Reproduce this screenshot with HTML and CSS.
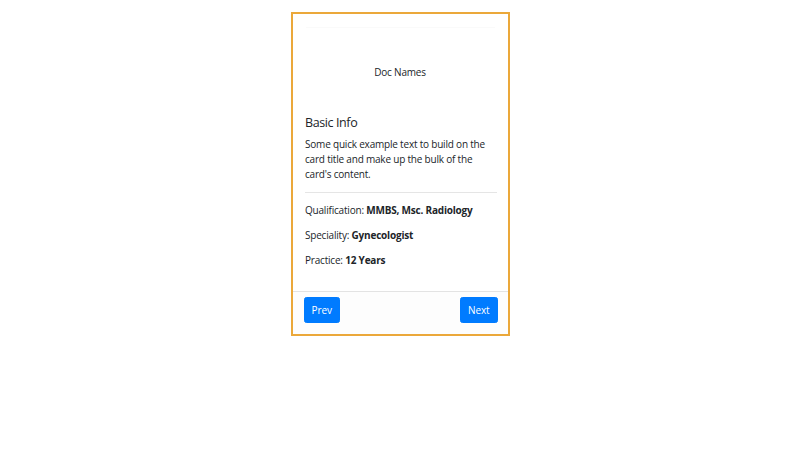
FILE: index.html
```html
<!DOCTYPE html>
<html lang="en">
<head>
<meta charset="utf-8">
<title>Doc Card</title>
<link rel="stylesheet" href="styles.css">
</head>
<body>
<div class="card">
  <div class="card-img">
    <span class="img-alt">Doc Names</span>
  </div>
  <div class="card-body">
    <h5 class="card-title">Basic Info</h5>
    <p class="card-text">Some quick example text to build on the card title and make up the bulk of the card's content.</p>
    <hr class="divider">
    <p class="info">Qualification: <b>MMBS, Msc. Radiology</b></p>
    <p class="info">Speciality: <b>Gynecologist</b></p>
    <p class="info">Practice: <b>12 Years</b></p>
  </div>
  <div class="card-footer">
    <button class="btn">Prev</button>
    <button class="btn">Next</button>
  </div>
</div>
</body>
</html>
```
FILE: styles.css
```css
html, body {
  margin: 0;
  padding: 0;
  background: #fff;
}
body {
  font-family: "Open Sans", "Noto Sans", sans-serif;
  font-size: 10px;
  line-height: 15px;
  letter-spacing: -0.2px;
  color: #212529;
}
.card {
  box-sizing: border-box;
  width: 219px;
  margin: 12px auto 0;
  border: 2px solid #eba83a;
  background: #fff;
  display: flex;
  flex-direction: column;
}
.card-img {
  height: 75px;
  margin: 13px 13px 0;
  border-top: 1px solid #fafafa;
  display: flex;
  justify-content: center;
  padding-top: 37px;
  box-sizing: border-box;
}
.img-alt {
  display: block;
}
.card-body {
  padding: 12.5px 10.5px 12.5px 12.5px;
}
.card-title {
  margin: 0 0 7.5px;
  font-size: 12.5px;
  line-height: 15px;
  font-weight: 400;
  letter-spacing: -0.4px;
}
.card-text, .info {
  margin: 0 0 10px;
}
.card-text {
  margin-right: 2px;
}
.info b {
  font-weight: 700;
}
.divider {
  margin: 10px 0;
  border: 0;
  border-top: 1px solid rgba(0,0,0,0.1);
}
.card-footer {
  display: flex;
  justify-content: space-between;
  padding: 5.5px 10px 10.5px 11px;
  border-top: 1px solid rgba(0,0,0,0.1);
  background: #fdfdfd;
}
.btn {
  font-family: inherit;
  font-size: 10px;
  line-height: 15px;
  letter-spacing: -0.1px;
  color: #fff;
  background: #007bff;
  border: 1px solid #007bff;
  border-radius: 2.5px;
  padding: 4.5px 7px;
  cursor: pointer;
}
```
